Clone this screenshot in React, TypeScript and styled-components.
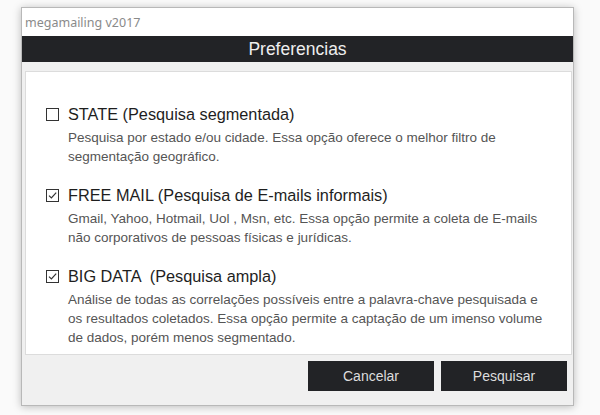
import React from "react";
import styled, { createGlobalStyle } from "styled-components";

const GlobalStyle = createGlobalStyle`
  html, body {
    margin: 0;
    padding: 0;
    background: #fafafa;
  }
  body {
    font-family: "Liberation Sans", Arial, sans-serif;
  }
`;

interface OptionProps {
  checked: boolean;
  title: string;
  lines: string[];
}

const CheckIcon = ({ checked }: { checked: boolean }): JSX.Element => (
  <svg width="13" height="13" viewBox="0 0 13 13">
    <rect x="0.5" y="0.5" width="12" height="12" fill="#fff" stroke="#333" strokeWidth="1" />
    {checked && (
      <path d="M3 6.6 L5.4 9 L10.2 3.6" fill="none" stroke="#333" strokeWidth="1.2" />
    )}
  </svg>
);

const Option = ({ checked, title, lines }: OptionProps): JSX.Element => (
  <OptionBlock>
    <OptionTitle>
      <CheckIcon checked={checked} />
      <span>{title}</span>
    </OptionTitle>
    <Description>
      {lines.map((l) => (
        <div key={l}>{l}</div>
      ))}
    </Description>
  </OptionBlock>
);

const App = (): JSX.Element => {
  return (
    <>
      <GlobalStyle />
      <Page>
        <Window>
          <TitleBar>megamailing v2017</TitleBar>
          <Header>Preferencias</Header>
          <Body>
            <Panel>
              <Option
                checked={false}
                title="STATE (Pesquisa segmentada)"
                lines={[
                  "Pesquisa por estado e/ou cidade. Essa opção oferece o melhor filtro de",
                  "segmentação geográfico.",
                ]}
              />
              <Option
                checked
                title="FREE MAIL (Pesquisa de E-mails informais)"
                lines={[
                  "Gmail, Yahoo, Hotmail, Uol , Msn, etc. Essa opção permite a coleta de E-mails",
                  "não corporativos de pessoas físicas e jurídicas.",
                ]}
              />
              <Option
                checked
                title="BIG DATA  (Pesquisa ampla)"
                lines={[
                  "Análise de todas as correlações possíveis entre a palavra-chave pesquisada e",
                  "os resultados coletados. Essa opção permite a captação de um imenso volume",
                  "de dados, porém menos segmentado.",
                ]}
              />
            </Panel>
          </Body>
          <Footer>
            <Button>Cancelar</Button>
            <Button>Pesquisar</Button>
          </Footer>
        </Window>
      </Page>
    </>
  );
};

export default App;

const Page = styled.div`
  width: 600px;
  height: 415px;
  padding: 7px 0 0 21px;
  box-sizing: border-box;
`;

const Window = styled.div`
  width: 553px;
  height: 399px;
  box-sizing: border-box;
  border: 1px solid #b8b8b8;
  background: #f0f0f0;
  box-shadow: 0 1px 8px rgba(0, 0, 0, 0.25);
  display: flex;
  flex-direction: column;
`;

const TitleBar = styled.div`
  height: 28px;
  background: #ffffff;
  display: flex;
  align-items: center;
  padding-left: 3px;
  font-family: "Noto Sans", "Open Sans", sans-serif;
  font-size: 12.5px;
  color: #8a8a8a;
`;

const Header = styled.div`
  height: 26px;
  background: #222326;
  color: #eeeeee;
  font-size: 17.5px;
  display: flex;
  align-items: center;
  justify-content: center;
`;

const Body = styled.div`
  padding: 9px 1px 0 3px;
`;

const Panel = styled.div`
  height: 284px;
  box-sizing: border-box;
  background: #ffffff;
  border: 1px solid #dcdcdc;
  padding: 32px 0 0 20px;
  display: flex;
  flex-direction: column;
  gap: 19px;
`;

const OptionBlock = styled.div`
  display: flex;
  flex-direction: column;
`;

const OptionTitle = styled.div`
  display: flex;
  align-items: center;
  gap: 9px;
  height: 20px;
  font-size: 16.3px;
  color: #1e1e1e;
  white-space: pre;
`;

const Description = styled.div`
  margin-top: 4px;
  padding-left: 22px;
  font-size: 13.5px;
  line-height: 19px;
  color: #555555;
  white-space: nowrap;
`;

const Footer = styled.div`
  display: flex;
  justify-content: flex-end;
  gap: 7px;
  padding: 6px 6px 0 0;
`;

const Button = styled.div`
  width: 126px;
  height: 30px;
  background: #222326;
  color: #dddddd;
  font-size: 14px;
  display: flex;
  align-items: center;
  justify-content: center;
  cursor: pointer;
`;
